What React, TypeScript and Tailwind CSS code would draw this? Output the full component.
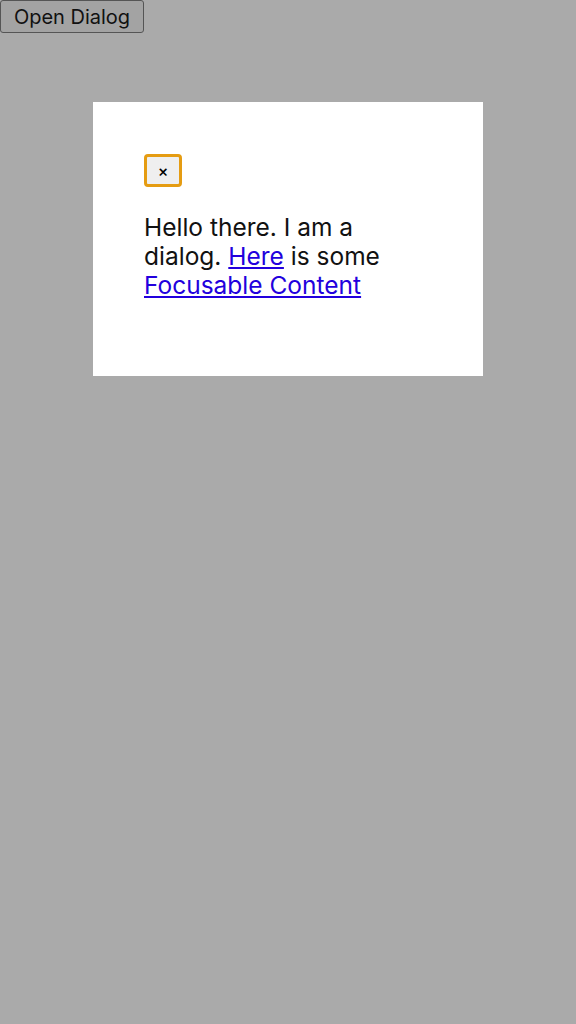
import React from "react";

export default function App() {
  return (
    <div className="min-h-[1024px] w-full bg-[#aaaaaa] relative" style={{ fontFamily: "Inter, 'Noto Sans', sans-serif" }}>
      <button className="ml-0 mt-0 h-[33px] w-[144px] border border-[#555] rounded-[3px] bg-[#a3a3a3] text-[20px] text-[#111] leading-none">
        Open Dialog
      </button>
      <div className="ml-[93px] mt-[69px] w-[390px] h-[274px] bg-white pt-[52px] pl-[51px] pr-[85px]">
        <button className="w-[38px] h-[33px] rounded-[4px] border-[3px] border-[#e59c12] bg-[#efefef] text-[16px] font-medium text-black flex items-center justify-center">
          ×
        </button>
        <p className="mt-[26px] text-[24.5px] leading-[29px] text-[#111]">
          Hello there. I am a dialog. <a href="#" className="text-[#2200dd] underline">Here</a> is some{" "}
          <a href="#" className="text-[#2200dd] underline">Focusable Content</a>
        </p>
      </div>
    </div>
  );
}
